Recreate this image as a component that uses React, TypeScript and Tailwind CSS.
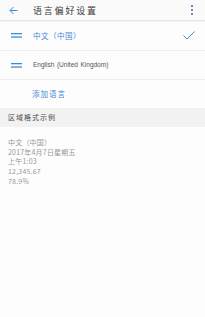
export default function App() {
  const font = { fontFamily: '"Noto Sans CJK SC", "Noto Sans", sans-serif' };
  const samples = ["中文（中国）", "2017年4月7日星期五", "上午1:03", "12,345.67", "78.9%"];

  const Handle = () => (
    <svg width="11" height="5" viewBox="0 0 11 5" className="shrink-0">
      <rect x="0" y="0" width="11" height="1.3" fill="#3f8ad6" />
      <rect x="0" y="3.4" width="11" height="1.3" fill="#3f8ad6" />
    </svg>
  );

  return (
    <div className="w-[205px] h-[317px] bg-[#fdfdfd] overflow-hidden flex flex-col" style={font}>
      {/* top bar */}
      <div className="h-[21px] flex items-center bg-[#fafafa] border-b border-[#e6e6e6] shadow-[0_1px_1px_rgba(0,0,0,0.04)]">
        <svg width="9" height="9" viewBox="0 0 9 9" className="ml-[9px]">
          <path d="M8.5 4.5H1M4.5 1L1 4.5L4.5 8" stroke="#3f8ad6" strokeWidth="1" fill="none" />
        </svg>
        <span className="ml-[15px] text-[9px] tracking-[1.8px] text-[#3a3a3a] leading-none">语言偏好设置</span>
        <div className="ml-auto mr-[12px] flex flex-col gap-[2px]">
          <span className="w-[2px] h-[2px] rounded-full bg-[#3d6a9a]" />
          <span className="w-[2px] h-[2px] rounded-full bg-[#3d6a9a]" />
          <span className="w-[2px] h-[2px] rounded-full bg-[#3d6a9a]" />
        </div>
      </div>

      {/* language rows */}
      <div className="h-[30px] flex items-center pl-[11px] pr-[10px] border-b border-[#eeeeee]">
        <Handle />
        <span className="ml-[11px] text-[7.5px] text-[#3f8ad6] tracking-[0.5px]">中文（中国）</span>
        <svg width="12" height="9" viewBox="0 0 12 9" className="ml-auto">
          <path d="M0.5 4.5L4 8L11.5 0.5" stroke="#3f8ad6" strokeWidth="1" fill="none" />
        </svg>
      </div>
      <div className="h-[29px] flex items-center pl-[11px] border-b border-[#eeeeee]">
        <Handle />
        <span className="ml-[11px] text-[6.5px] text-[#555]" style={{ fontFamily: '"Liberation Sans", sans-serif', wordSpacing: "0.8px" }}>
          English (United Kingdom)
        </span>
      </div>
      <div className="h-[28px] flex items-center pl-[32px]">
        <span className="text-[7.5px] text-[#3f8ad6] tracking-[1px]">添加语言</span>
      </div>

      {/* section header */}
      <div className="h-[19px] flex items-center pl-[8px] bg-[#f2f2f2]">
        <span className="text-[7px] text-[#4a4a4a] tracking-[1px]">区域格式示例</span>
      </div>

      {/* samples */}
      <div className="pt-[11px] pl-[8px] flex flex-col">
        {samples.map((s) => (
          <span key={s} className="text-[7px] leading-[9.7px] text-[#999] tracking-[0.2px]">
            {s}
          </span>
        ))}
      </div>
    </div>
  );
}
